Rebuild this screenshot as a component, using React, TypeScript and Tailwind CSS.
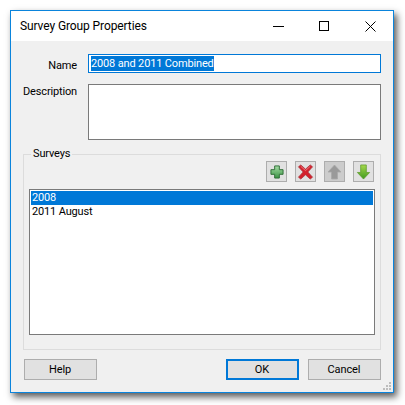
const font = { fontFamily: 'Roboto, sans-serif' };

const PlusIcon = () => (
  <svg width="14" height="14" viewBox="0 0 15 15">
    <defs>
      <linearGradient id="plusFill" x1="0" y1="0" x2="0" y2="1">
        <stop offset="0" stopColor="#a5dca5" />
        <stop offset="1" stopColor="#3c9444" />
      </linearGradient>
    </defs>
    <path d="M5 1h5v4h4v5h-4v4H5v-4H1V5h4z" fill="url(#plusFill)" stroke="#2b6b33" strokeWidth="1" />
  </svg>
);

const CrossIcon = () => (
  <svg width="17" height="16" viewBox="0 0 18 17">
    <path d="M1.500 3 4 1l5 4.500L14 1l2.500 2-5 5.500 5 5.500-2.500 2L9 11.500 4 16l-2.500-2 5-5.500z" fill="#d3202c" stroke="#a8323a" strokeWidth="0.8" />
    <path d="M4 2.500 9 7l5-4.500" fill="none" stroke="#ee7a80" strokeWidth="1" />
  </svg>
);

const UpIcon = () => (
  <svg width="15" height="16" viewBox="0 0 15 16">
    <path d="M7.500 1 14 8h-3.500v7h-6V8H1z" fill="#9a9a9a" stroke="#a8a8a8" strokeWidth="0.8" />
  </svg>
);

const DownIcon = () => (
  <svg width="15" height="16" viewBox="0 0 15 17">
    <defs>
      <linearGradient id="downFill" x1="0" y1="0" x2="0" y2="1">
        <stop offset="0" stopColor="#a6d84c" />
        <stop offset="1" stopColor="#3f9a1e" />
      </linearGradient>
    </defs>
    <path d="M4.500 1h6v8H14l-6.500 7L1 9h3.500z" fill="url(#downFill)" stroke="#5b9a2a" strokeWidth="0.8" />
  </svg>
);

const ToolButton = ({ children, disabled }: { children: React.ReactNode; disabled?: boolean }) => (
  <button className={`w-[21px] h-[21px] border border-[#adadad] flex items-center justify-center ${disabled ? 'bg-[#cccccc]' : 'bg-[#e1e1e1]'}`}>
    {children}
  </button>
);

const DialogButton = ({ label, primary, className }: { label: string; primary?: boolean; className: string }) => (
  <button className={`h-[21px] pt-[2px] pr-[1px] bg-[#e1e1e1] text-[11px] tracking-[-0.1px] text-black flex items-center justify-center ${primary ? 'border-2 border-[#0078d7]' : 'border border-[#adadad]'} ${className}`}>
    {label}
  </button>
);

export default function App() {
  return (
    <div className="w-[405px] h-[405px] bg-white pt-[10px] pl-[10px] overflow-hidden" style={font}>
      <div className="w-[384px] h-[383px] border border-[#0a84dc] bg-[#f0f0f0] flex flex-col shadow-[3px_4px_7px_rgba(0,0,0,0.65)]">
        {/* Title bar */}
        <div className="h-[30px] bg-white flex items-center shrink-0">
          <span className="ml-[9px] text-[12px] tracking-[-0.1px] text-black flex-1">Survey Group Properties</span>
          <div className="flex items-center">
            <div className="w-[46px] flex justify-center">
              <div className="w-[11px] h-px bg-black" />
            </div>
            <div className="w-[46px] flex justify-center">
              <div className="w-[10px] h-[10px] border border-black" />
            </div>
            <div className="w-[46px] flex justify-center">
              <svg width="11" height="11" viewBox="0 0 11 11">
                <path d="M.5.500l10 10M10.500.500l-10 10" stroke="#000" strokeWidth="1" fill="none" />
              </svg>
            </div>
          </div>
        </div>

        {/* Body */}
        <div className="flex-1 relative flex flex-col pt-[13px] pl-[12px] pr-[12px] text-[11px] tracking-[-0.15px]">
          <div className="flex items-start gap-[11px] h-[19px]">
            <span className="w-[54px] text-right text-black leading-[15px] pt-[4px]">Name</span>
            <div className="w-[293px] h-[19px] border border-[#0078d7] bg-white flex items-center px-[2px]">
              <span className="bg-[#0078d7] text-white leading-[15px]">2008 and 2011 Combined</span>
            </div>
          </div>
          <div className="flex items-start gap-[11px] mt-[11px]">
            <span className="w-[54px] text-right text-black leading-[15px] whitespace-nowrap">Description</span>
            <div className="w-[293px] h-[56px] border border-[#7a7a7a] bg-white" />
          </div>

          {/* Surveys group */}
          <div className="relative mt-[14px] h-[196px] w-[358px] border border-[#dcdcdc] px-[5px] pt-[6px]">
            <span className="absolute -top-[9px] left-[7px] bg-[#f0f0f0] px-[2px] text-black leading-[16px]">Surveys</span>
            <div className="flex justify-end gap-[8px] pr-[1px]">
              <ToolButton><PlusIcon /></ToolButton>
              <ToolButton><CrossIcon /></ToolButton>
              <ToolButton disabled><UpIcon /></ToolButton>
              <ToolButton><DownIcon /></ToolButton>
            </div>
            <div className="mt-[7px] w-[346px] h-[146px] border border-[#7a7a7a] bg-white p-px leading-[14px] text-black">
              <div className="bg-[#0078d7] text-white pl-[1px]">2008</div>
              <div className="pl-[1px]">2011 August</div>
            </div>
          </div>

          {/* Footer buttons */}
          <div className="flex mt-[9px] w-[358px]">
            <DialogButton label="Help" className="w-[73px] ml-[1px]" />
            <DialogButton label="OK" primary className="w-[73px] ml-auto mr-[1px]" />
            <DialogButton label="Cancel" className="w-[73px] ml-[8px]" />
          </div>

          {/* Size grip */}
          <svg className="absolute right-[1px] bottom-[1px]" width="10" height="10" viewBox="0 0 10 10">
            <path d="M7 1h2v2H7zM4 4h2v2H4zM7 4h2v2H7zM1 7h2v2H1zM4 7h2v2H4zM7 7h2v2H7z" fill="#bdbdbd" />
          </svg>
        </div>
      </div>
    </div>
  );
}
